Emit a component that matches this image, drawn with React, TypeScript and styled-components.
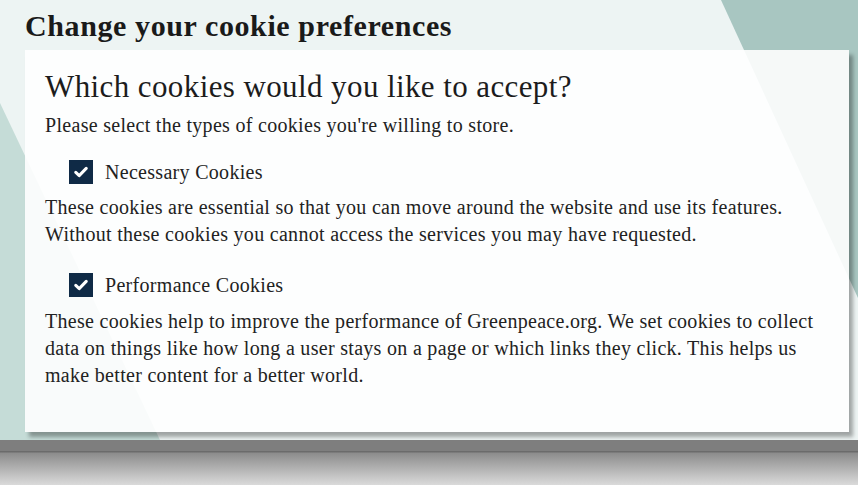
import styled, { createGlobalStyle } from 'styled-components';

const GlobalStyle = createGlobalStyle`
  html, body {
    margin: 0;
    padding: 0;
  }
  body {
    width: 858px;
    height: 485px;
    overflow: hidden;
    font-family: 'Liberation Serif', 'DejaVu Serif', serif;
    color: #1f1f1f;
  }
`;

const Page = styled.div`
  display: flex;
  flex-direction: column;
  width: 858px;
  height: 485px;
`;

const Scene = styled.section`
  position: relative;
  height: 440px;
  padding: 9px 9px 0 25px;
  box-sizing: border-box;
  background: #edf4f3;
  overflow: hidden;
  isolation: isolate;

  /* teal slab, top right */
  &::before {
    content: '';
    position: absolute;
    inset: 0;
    background: #a8c6c1;
    clip-path: polygon(721px 0, 858px 0, 858px 298px);
    z-index: -1;
  }

  /* pale teal wedge, bottom left */
  &::after {
    content: '';
    position: absolute;
    inset: 0;
    background: #c5dcd7;
    clip-path: polygon(0 103px, 160px 440px, 0 440px);
    z-index: -1;
  }
`;

const PageTitle = styled.h1`
  margin: 0;
  font-size: 30px;
  line-height: 34px;
  font-weight: 700;
  letter-spacing: 0.6px;
  color: #1a1a1a;
`;

const Card = styled.div`
  margin-top: 7px;
  padding: 19px 20px 43px;
  background: rgba(255, 255, 255, 0.89);
  box-shadow: 4px 5px 4px rgba(0, 0, 0, 0.33);
`;

const Question = styled.h2`
  margin: 0;
  font-size: 31px;
  line-height: 36px;
  font-weight: 400;
  letter-spacing: 0.4px;
  color: #1c1c1c;
`;

const Text = styled.p<{ $gap?: number }>`
  margin: ${(p) => p.$gap ?? 0}px 0 0;
  font-size: 20px;
  line-height: 27px;
  letter-spacing: 0.3px;
  color: #222;
`;

const OptionRow = styled.label<{ $gap: number }>`
  display: flex;
  align-items: center;
  gap: 12px;
  margin: ${(p) => p.$gap}px 0 0 24px;
  min-height: 24px;
  font-size: 20px;
  line-height: 24px;
  letter-spacing: 0.3px;
  color: #222;
`;

const Box = styled.span`
  display: flex;
  align-items: center;
  justify-content: center;
  width: 24px;
  height: 24px;
  flex: none;
  background: #0f2a46;
`;

const Footer = styled.div`
  flex: 1;
  background: linear-gradient(
    180deg,
    #7e7e7e 0,
    #7e7e7e 11px,
    #6b6b6b 11px,
    #6b6b6b 12px,
    #8c8c8c 13px,
    #dadada 100%
  );
`;

const Check = () => (
  <svg width="14" height="12" viewBox="0 0 14 12" aria-hidden>
    <path d="M1.8 6.4 5.2 9.6 12.2 2.4" fill="none" stroke="#fff" strokeWidth="3" strokeLinecap="round" strokeLinejoin="round" />
  </svg>
);

const Option = ({ label, gap }: { label: string; gap: number }) => (
  <OptionRow $gap={gap}>
    <Box>
      <Check />
    </Box>
    {label}
  </OptionRow>
);

export default function App() {
  return (
    <Page>
      <GlobalStyle />
      <Scene>
        <PageTitle>Change your cookie preferences</PageTitle>
        <Card>
          <Question>Which cookies would you like to accept?</Question>
          <Text $gap={7}>Please select the types of cookies you're willing to store.</Text>
          <Option label="Necessary Cookies" gap={21} />
          <Text $gap={10}>
            These cookies are essential so that you can move around the website and use its features.
            Without these cookies you cannot access the services you may have requested.
          </Text>
          <Option label="Performance Cookies" gap={25} />
          <Text $gap={11}>
            These cookies help to improve the performance of Greenpeace.org. We set cookies to collect
            data on things like how long a user stays on a page or which links they click. This helps us
            make better content for a better world.
          </Text>
        </Card>
      </Scene>
      <Footer />
    </Page>
  );
}
